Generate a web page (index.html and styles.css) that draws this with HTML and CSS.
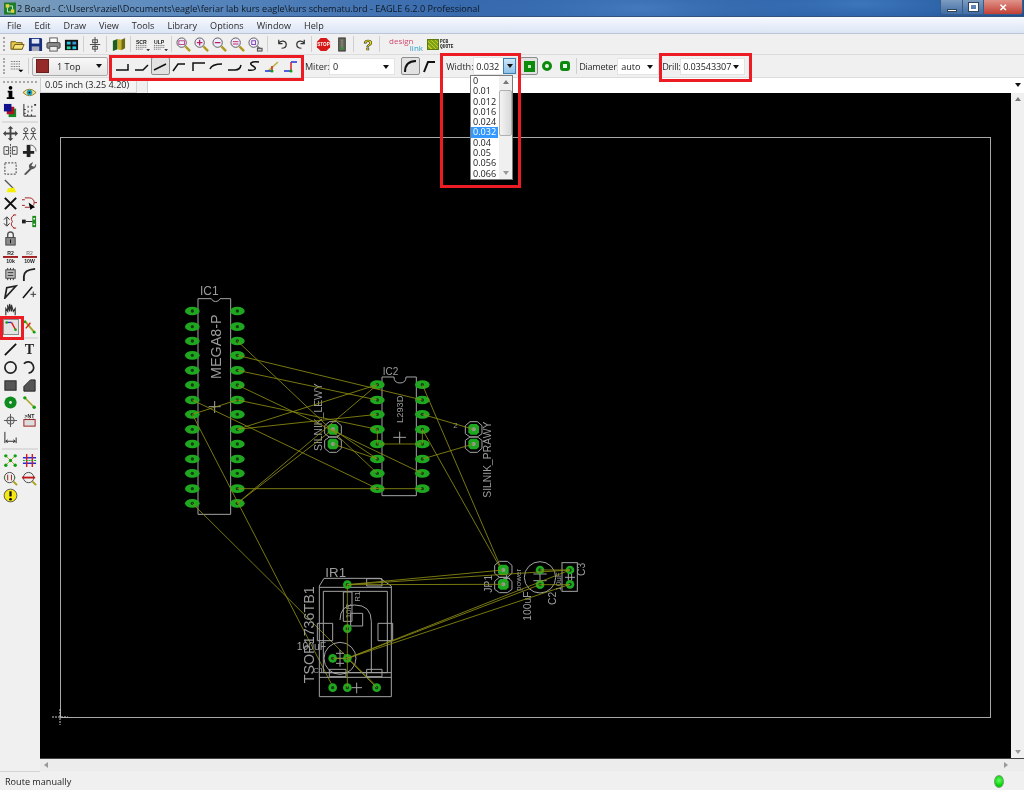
FILE: index.html
```html
<!DOCTYPE html>
<html lang="en">
<head>
<meta charset="utf-8">
<title>2 Board - EAGLE 6.2.0 Professional</title>
<link rel="stylesheet" href="styles.css">
</head>
<body>
<div class="window">
  <header class="titlebar">
    <svg class="app-icon" viewBox="0 0 14 14"><rect width="14" height="14" fill="#1f7a2a"/><rect x="2" y="2" width="4" height="4" fill="#e8d23a"/><rect x="8" y="8" width="4" height="4" fill="#e8d23a"/><path d="M6 4H10V8M4 6V11H8" stroke="#cfe" fill="none"/></svg>
    <span class="title-text">2 Board - C:\Users\raziel\Documents\eagle\feriar lab kurs eagle\kurs schematu.brd - EAGLE 6.2.0 Professional</span>
    <div class="win-controls">
      <span class="win-btn win-min"><i class="glyph-min"></i></span>
      <span class="win-btn win-max"><i class="glyph-max"></i></span>
      <span class="win-btn win-close">✕</span>
    </div>
  </header>

  <nav class="menubar">
    <span>File</span><span>Edit</span><span>Draw</span><span>View</span><span>Tools</span><span>Library</span><span>Options</span><span>Window</span><span>Help</span>
  </nav>

  <div class="toolbar tb-main">
    <i class="grip"></i>
    <span class="btn"><svg viewBox="0 0 16 16"><path d="M1 5H6L7 6H13V13H1Z" fill="#e8c64a" stroke="#6b5a12"/><path d="M3 13L5 8H15L13 13Z" fill="#f6e27d" stroke="#6b5a12"/></svg></span>
    <span class="btn"><svg viewBox="0 0 16 16"><path d="M1 1H14L15 2V15H1Z" fill="#17307e"/><rect x="4" y="2" width="8" height="5" fill="#e4e8f4"/><rect x="4" y="10" width="8" height="5" fill="#aab"/></svg></span>
    <span class="btn"><svg viewBox="0 0 16 16"><rect x="4" y="1" width="8" height="5" fill="#fff" stroke="#555"/><rect x="1" y="6" width="14" height="6" rx="1" fill="#8a8a8a" stroke="#444"/><rect x="4" y="10" width="8" height="5" fill="#eee" stroke="#555"/></svg></span>
    <span class="btn"><svg viewBox="0 0 16 16"><rect x="1" y="3" width="14" height="11" fill="#111"/><rect x="3" y="5" width="4" height="3" fill="#26c6e8"/><rect x="9" y="5" width="4" height="3" fill="#39d"/><rect x="3" y="10" width="4" height="3" fill="#2bd4a0"/><rect x="9" y="10" width="4" height="3" fill="#26c6e8"/></svg></span>
    <i class="sep sep-6"></i>
    <span class="btn"><svg viewBox="0 0 16 16" fill="none" stroke="#444"><rect x="5" y="3" width="5" height="3"/><rect x="5" y="10" width="5" height="3"/><path d="M7.5 0V16M2 8H13"/></svg></span>
    <i class="sep"></i>
    <span class="btn"><svg viewBox="0 0 16 16"><path d="M2 4L7 2V13L2 15Z" fill="#1f5c1f"/><path d="M7 2L11 3V14L7 13Z" fill="#c8b020"/><path d="M11 3L15 1V12L11 14Z" fill="#6d6a10"/></svg></span>
    <i class="sep sep-6"></i>
    <span class="btn"><svg viewBox="0 0 16 16"><text x="1" y="7" class="tiny">SCR</text><path d="M1 9H12M1 11H12M1 13H9" stroke="#555" stroke-dasharray="1 1"/><path d="M12 13H16L14 15Z"/></svg></span>
    <span class="btn"><svg viewBox="0 0 16 16"><text x="1" y="7" class="tiny">ULP</text><path d="M1 9H12M1 11H12M1 13H9" stroke="#555" stroke-dasharray="1 1"/><path d="M12 13H16L14 15Z"/></svg></span>
    <i class="sep"></i>
    <span class="btn"><svg viewBox="0 0 16 16"><circle cx="6" cy="6" r="5" fill="#eef" stroke="#555"/><path d="M10 10L15 15" stroke="#b09a20" stroke-width="2.5"/><rect x="3" y="4" width="6" height="4" fill="none" stroke="#c04080"/></svg></span>
    <span class="btn"><svg viewBox="0 0 16 16"><circle cx="6" cy="6" r="5" fill="#eef" stroke="#555"/><path d="M10 10L15 15" stroke="#b09a20" stroke-width="2.5"/><path d="M3 6H9M6 3V9" stroke="#c02060" stroke-width="1.4"/></svg></span>
    <span class="btn"><svg viewBox="0 0 16 16"><circle cx="6" cy="6" r="5" fill="#eef" stroke="#555"/><path d="M10 10L15 15" stroke="#b09a20" stroke-width="2.5"/><path d="M3 6H9" stroke="#c02060" stroke-width="1.4"/></svg></span>
    <span class="btn"><svg viewBox="0 0 16 16"><circle cx="6" cy="6" r="5" fill="#eef" stroke="#555"/><path d="M10 10L15 15" stroke="#b09a20" stroke-width="2.5"/><path d="M3 5H9M3 7.5H9" stroke="#c02060"/></svg></span>
    <span class="btn"><svg viewBox="0 0 16 16"><circle cx="6" cy="6" r="5" fill="#eef" stroke="#555"/><path d="M10 10L13 13" stroke="#777" stroke-width="2"/><rect x="4" y="4" width="4" height="4" fill="none" stroke="#8040b0"/><rect x="10" y="12" width="5" height="3" fill="#ccc" stroke="#444"/></svg></span>
    <i class="sep sep-9"></i>
    <span class="btn"><svg viewBox="0 0 16 16" fill="none" stroke="#333" stroke-width="1.3"><path d="M4 7C6 3 12 4 12 8S8 12 7 12M4 3V7H8"/></svg></span>
    <span class="btn"><svg viewBox="0 0 16 16" fill="none" stroke="#333" stroke-width="1.3"><path d="M12 7C10 3 4 4 4 8S8 12 9 12M12 3V7H8"/></svg></span>
    <i class="sep"></i>
    <span class="btn"><svg viewBox="0 0 16 16"><path d="M5 1H11L15 5V11L11 15H5L1 11V5Z" fill="#d81818"/><text x="8" y="10" text-anchor="middle" class="stop">STOP</text></svg></span>
    <span class="btn"><svg viewBox="0 0 16 16"><rect x="5" y="1" width="7" height="14" fill="#6a6a5a" stroke="#333"/><path d="M8.5 3V12" stroke="#bbb" stroke-dasharray="1 1"/><path d="M7 11H10V13H7Z" fill="#20a030"/></svg></span>
    <i class="sep sep-9"></i>
    <span class="btn help">?</span>
    <i class="sep"></i>
    <span class="logo-design"><b>design</b><em>link</em></span>
    <span class="logo-pcb"><i></i><span>PCB<br>QUOTE</span></span>
  </div>

  <div class="toolbar tb-opts">
    <i class="grip"></i>
    <span class="btn grid-btn"><svg viewBox="0 0 18 16"><path d="M1 2H12M1 5H12M1 8H12M1 11H12" stroke="#444" stroke-dasharray="1 1"/><path d="M10 12H16L13 15Z"/></svg></span>
    <i class="sep"></i>
    <div class="select layer-select"><i class="swatch"></i><span>1 Top</span><i class="arrow"></i></div>
    <div class="bends">
      <span class="bend"><svg viewBox="0 0 16 16"><path d="M1 12H13V6"/></svg></span>
      <span class="bend"><svg viewBox="0 0 16 16"><path d="M1 12H9L14 7"/></svg></span>
      <span class="bend bend-on"><svg viewBox="0 0 16 16"><path d="M2 12L14 6"/></svg></span>
      <span class="bend"><svg viewBox="0 0 16 16"><path d="M2 13L7 6H14"/></svg></span>
      <span class="bend"><svg viewBox="0 0 16 16"><path d="M3 13V5H15"/></svg></span>
      <span class="bend"><svg viewBox="0 0 16 16"><path d="M2 11Q4 6 14 6"/></svg></span>
      <span class="bend"><svg viewBox="0 0 16 16"><path d="M1 12H8Q13 12 14 7"/></svg></span>
      <span class="bend"><svg viewBox="0 0 16 16"><path d="M14 4C5 3 4 6 8 8S11 13 3 12"/></svg></span>
      <span class="bend bend-color"><svg viewBox="0 0 16 16"><path d="M4 13L14 4" stroke="#b8b040"/><path d="M8 8V13" stroke="#e02020"/><path d="M1 13H8" stroke="#2030e0"/><circle cx="8" cy="13" r="1.5" fill="#10a010" stroke="none"/></svg></span>
      <span class="bend bend-color"><svg viewBox="0 0 16 16"><path d="M8 4V13" stroke="#e02020"/><path d="M1 13H8M8 4H14" stroke="#2030e0"/><circle cx="8" cy="13" r="1.5" fill="#10a010" stroke="none"/></svg></span>
    </div>
    <label class="lbl lbl-miter">Miter:</label>
    <div class="select miter-select"><span>0</span><i class="arrow"></i></div>
    <span class="bend miter-a bend-on"><svg viewBox="0 0 16 16"><path d="M3 14Q3 3 14 3" stroke-width="2"/></svg></span>
    <span class="bend miter-b"><svg viewBox="0 0 16 16"><path d="M3 14L7 4H14" stroke-width="2"/></svg></span>
    <label class="lbl lbl-width">Width:</label>
    <div class="select width-select"><span>0.032</span><i class="arrow-btn"><i class="arrow"></i></i></div>
    <span class="pad-btn pad-on"><i class="pad-sq"></i></span>
    <span class="pad-btn"><i class="pad-round"></i></span>
    <span class="pad-btn"><i class="pad-oct"></i></span>
    <i class="sep"></i>
    <label class="lbl lbl-diam">Diameter:</label>
    <div class="select diam-select"><span>auto</span><i class="arrow"></i></div>
    <label class="lbl lbl-drill">Drill:</label>
    <div class="select drill-select"><span>0.03543307</span><i class="arrow"></i></div>
  </div>

  <div class="workspace">
    <aside class="toolbox">
      <i class="grip-h"></i>
      <span class="tool"><svg viewBox="0 0 16 16"><circle cx="8" cy="3" r="2"/><path d="M5 6H10V13H12V15H4V13H6V8H5Z"/></svg></span>
      <span class="tool"><svg viewBox="0 0 16 16"><path d="M1 8Q8 1 15 8Q8 15 1 8Z" fill="#f4e48a" stroke="#8a7a20"/><circle cx="8" cy="8" r="3" fill="#18a0c8"/><circle cx="8" cy="8" r="1"/></svg></span>
      <span class="tool"><svg viewBox="0 0 16 16"><rect x="6" y="6" width="8" height="9" fill="#118c24"/><rect x="4" y="4" width="8" height="8" fill="#b01020"/><rect x="1" y="1" width="8" height="8" fill="#10108c"/></svg></span>
      <span class="tool"><svg viewBox="0 0 16 16"><path d="M2 1V14H15" fill="none" stroke="#222"/><path d="M2 11H4M2 7H4M6 14V12M10 14V12" stroke="#222"/><path d="M6 4H7M10 4H11M13 2H15M6 9H7M10 8H11" stroke="#333" stroke-width="2"/></svg></span>
      <i class="tool-sep"></i>
      <span class="tool"><svg viewBox="0 0 16 16"><path d="M8 0L11 3H9V7H13V5L16 8L13 11V9H9V13H11L8 16L5 13H7V9H3V11L0 8L3 5V7H7V3H5Z" fill="#444"/></svg></span>
      <span class="tool"><svg viewBox="0 0 16 16" fill="none" stroke="#444"><circle cx="4" cy="4" r="2"/><circle cx="12" cy="4" r="2"/><path d="M4 6V10M1 15L4 10L7 15M1 8H7M12 6V10M9 15L12 10L15 15M9 8H15"/></svg></span>
      <span class="tool"><svg viewBox="0 0 16 16"><path d="M1 4H6V12H1ZM10 4H15V12H10Z" fill="#eee" stroke="#444"/><path d="M8 1V15" stroke="#444" stroke-dasharray="2 1"/><path d="M3 8H5M11 8H13" stroke="#333"/></svg></span>
      <span class="tool"><svg viewBox="0 0 16 16"><path d="M7 2V15" stroke="#222" stroke-width="4"/><path d="M1 10H13" stroke="#222" stroke-width="3"/><path d="M9 2Q15 3 15 9" fill="none" stroke="#666"/></svg></span>
      <span class="tool"><svg viewBox="0 0 16 16"><rect x="2" y="2" width="12" height="12" fill="none" stroke="#333" stroke-dasharray="2 1.5"/></svg></span>
      <span class="tool"><svg viewBox="0 0 16 16"><path d="M2 14L8 8Q6 4 10 2L12 1L10 5L13 6L15 3Q16 8 10 9L4 15Z" fill="#555"/></svg></span>
      <span class="tool"><svg viewBox="0 0 16 16"><path d="M2 1L11 10" stroke="#555" stroke-width="1.5"/><path d="M5 10L12 9L14 14H4Z" fill="#f4f000"/></svg></span>
      <span class="tool-gap"></span>
      <span class="tool"><svg viewBox="0 0 16 16"><path d="M2 2L14 14M14 2L2 14" stroke="#111" stroke-width="2.2"/></svg></span>
      <span class="tool"><svg viewBox="0 0 16 16"><path d="M3 2H8A5 5 0 0 1 8 12H3M0 4H3M0 10H3M13 7H16" fill="none" stroke="#a01818"/><path d="M7 7L14 12L11 13L9 15Z"/></svg></span>
      <span class="tool"><svg viewBox="0 0 16 16"><path d="M11 1H14M11 15H14M12 1Q7 4 10 8Q7 12 12 15" fill="none" stroke="#a01818"/><path d="M4 4V12M1 6L4 3L7 6M1 10L4 13L7 10" fill="none" stroke="#222"/></svg></span>
      <span class="tool"><svg viewBox="0 0 16 16"><rect x="11" y="2" width="4" height="12" fill="#1a8a1a"/><rect x="0" y="6" width="4" height="4" fill="#222"/><path d="M4 8H11" stroke="#222"/><circle cx="13" cy="5" r="1" fill="#fff"/><circle cx="13" cy="11" r="1" fill="#fff"/></svg></span>
      <span class="tool"><svg viewBox="0 0 16 16"><path d="M5 7V4A3 3 0 0 1 11 4V7" fill="none" stroke="#555" stroke-width="1.5"/><rect x="3" y="7" width="10" height="8" fill="#8a8a8a" stroke="#444"/><path d="M8 9V13" stroke="#111"/></svg></span>
      <span class="tool-gap"></span>
      <span class="tool"><svg viewBox="0 0 16 16"><text x="8" y="6" text-anchor="middle" class="tiny">R2</text><path d="M0 8.5H16" stroke="#a01818" stroke-width="2"/><text x="8" y="15" text-anchor="middle" class="tiny">10k</text></svg></span>
      <span class="tool"><svg viewBox="0 0 16 16"><text x="8" y="6" text-anchor="middle" class="tiny tiny-grey">R2</text><path d="M0 8.5H16" stroke="#a01818" stroke-width="2"/><text x="8" y="15" text-anchor="middle" class="tiny">10W</text></svg></span>
      <span class="tool"><svg viewBox="0 0 16 16"><rect x="3" y="3" width="10" height="9" fill="#bbb" stroke="#444"/><path d="M5 1V3M8 1V3M11 1V3M5 12V14M8 12V14M11 12V14" stroke="#333"/><path d="M5 6H11M5 9H11" stroke="#333"/></svg></span>
      <span class="tool"><svg viewBox="0 0 16 16"><path d="M2 15V10Q2 3 14 2" fill="none" stroke="#222" stroke-width="2"/></svg></span>
      <span class="tool"><svg viewBox="0 0 16 16"><path d="M2 15L4 4L14 2L2 15Z" fill="none" stroke="#222" stroke-width="1.8"/></svg></span>
      <span class="tool"><svg viewBox="0 0 16 16"><path d="M1 15L11 3" stroke="#111" stroke-width="1.6"/><path d="M9 11H15M12 8V14" stroke="#333"/></svg></span>
      <span class="tool"><svg viewBox="0 0 16 16"><path d="M3 14V7L5 10V3L7 10V2L9 10V3L11 10L13 7V14" fill="none" stroke="#333" stroke-width="1.2"/></svg></span>
      <span class="tool-gap"></span>
      <span class="tool tool-on"><svg viewBox="0 0 16 16"><path d="M2 3H8" stroke="#2030d0" stroke-width="1.6"/><path d="M8 3L13 12" stroke="#e01818" stroke-width="1.8"/><circle cx="2" cy="3" r="1.6" fill="#10a010"/><circle cx="13" cy="12" r="1.6" fill="#10a010"/></svg></span>
      <span class="tool"><svg viewBox="0 0 16 16"><path d="M3 2L13 14" stroke="#a8a020" stroke-width="2"/><path d="M9 4L4 10" stroke="#e01818" stroke-width="1.4"/><circle cx="3" cy="3" r="1.5" fill="#10a010"/><circle cx="13" cy="14" r="1.5" fill="#10a010"/></svg></span>
      <i class="tool-sep"></i>
      <span class="tool"><svg viewBox="0 0 16 16"><path d="M2 14L14 2" stroke="#111" stroke-width="1.8"/></svg></span>
      <span class="tool tool-t">T</span>
      <span class="tool"><svg viewBox="0 0 16 16"><circle cx="8" cy="8" r="6" fill="none" stroke="#222" stroke-width="1.8"/></svg></span>
      <span class="tool"><svg viewBox="0 0 16 16"><path d="M2 4A6 6 0 1 1 7 14" fill="none" stroke="#222" stroke-width="1.8"/></svg></span>
      <span class="tool"><svg viewBox="0 0 16 16"><rect x="2" y="3" width="12" height="10" fill="#555" stroke="#222"/></svg></span>
      <span class="tool"><svg viewBox="0 0 16 16"><path d="M2 9L9 2H14V14H2Z" fill="#555" stroke="#222"/></svg></span>
      <span class="tool"><svg viewBox="0 0 16 16"><circle cx="8" cy="8" r="6.5" fill="#0e8c1e"/><circle cx="8" cy="8" r="1.5" fill="#e8e8e8"/></svg></span>
      <span class="tool"><svg viewBox="0 0 16 16"><path d="M3 3L13 13" stroke="#a8a020" stroke-width="1.6"/><circle cx="3" cy="3" r="1.8" fill="#10a010"/><circle cx="13" cy="13" r="1.8" fill="#10a010"/></svg></span>
      <span class="tool"><svg viewBox="0 0 16 16"><circle cx="8" cy="8" r="4" fill="#ddd" stroke="#555"/><path d="M1 8H15M8 1V15" stroke="#555"/></svg></span>
      <span class="tool"><svg viewBox="0 0 16 16"><text x="8" y="5" text-anchor="middle" class="tiny">&gt;NT</text><rect x="2" y="7" width="12" height="7" fill="#ddd" stroke="#a01818"/><path d="M4 6V7M8 6V7M12 6V7" stroke="#333"/></svg></span>
      <span class="tool"><svg viewBox="0 0 16 16"><path d="M2 2V14M14 8V14M3 12H13M3 12L5 10.5M3 12L5 13.5M13 12L11 10.5M13 12L11 13.5" fill="none" stroke="#222"/></svg></span>
      <span class="tool-gap"></span>
      <i class="tool-sep"></i>
      <span class="tool"><svg viewBox="0 0 16 16"><path d="M3 3L13 13M13 3L3 13" stroke="#b0a830"/><circle cx="3" cy="3" r="1.8" fill="#10a010"/><circle cx="13" cy="3" r="1.8" fill="#10a010"/><circle cx="3" cy="13" r="1.8" fill="#10a010"/><circle cx="13" cy="13" r="1.8" fill="#10a010"/><circle cx="8" cy="8" r="1.8" fill="#10a010"/></svg></span>
      <span class="tool"><svg viewBox="0 0 16 16"><path d="M1 5H15M1 11H15" stroke="#2030e0" stroke-width="1.5"/><path d="M5 1V15M11 1V15" stroke="#e01818" stroke-width="1.5"/><path d="M1 8H15" stroke="#10a010" stroke-dasharray="2 1"/></svg></span>
      <span class="tool"><svg viewBox="0 0 16 16"><circle cx="7" cy="7" r="5.5" fill="#eee" stroke="#444"/><path d="M5 4V10M9 4V10" stroke="#a01818"/><path d="M2 7H1M12 7H13" stroke="#10a010" stroke-width="2"/><path d="M11 11L15 15" stroke="#a8a020" stroke-width="2"/></svg></span>
      <span class="tool"><svg viewBox="0 0 16 16"><circle cx="7" cy="7" r="5.5" fill="#eee" stroke="#444"/><path d="M0 7H14" stroke="#c01818" stroke-width="2"/><path d="M11 11L15 15" stroke="#a8a020" stroke-width="2"/></svg></span>
      <span class="tool"><svg viewBox="0 0 16 16"><circle cx="8" cy="8" r="6.8" fill="#f5e810" stroke="#555"/><path d="M8 3.5V9" stroke="#111" stroke-width="2.4"/><circle cx="8" cy="12" r="1.4"/></svg></span>
    </aside>

    <div class="editor">
      <div class="coordbar">
        <span class="coord-field">0.05 inch (3.25 4.20)</span>
        <span class="coord-gap"></span>
        <span class="cmd-input"><i class="arrow"></i></span>
      </div>
      <div class="canvas-row">
        <svg class="board" viewBox="40 93 971 665" preserveAspectRatio="none">
          <defs>
            <g id="pad"><ellipse rx="22" ry="13" fill="#1fa81f"/><circle r="5" fill="#123c12"/></g>
            <g id="rpad"><circle r="13" fill="#1fa81f"/><circle r="5" fill="#123c12"/></g>
            <g id="opad"><path d="M-16 -9L-9 -16H9L16 -9V9L9 16H-9L-16 9Z" fill="#1fa81f"/><circle r="6" fill="#9a9a9a"/></g>
          </defs>
          <rect x="40" y="93" width="971" height="665" fill="#000"/>
          <rect class="outline" x="60" y="137" width="930" height="580"/>
          <path class="cross" d="M52 717H68M60 709V725"/>

          <g transform="translate(170 275) scale(.33333)">
            <g class="silk">
              <path d="M84 71H124A14 14 0 0 0 150 71H182V718H84Z"/>
              <path d="M636 306H672Q672 324 690 324T708 306H739V662H636Z"/>
              <path d="M116 395H152M134 378V414M670 487H708M689 470V506"/>
              <path d="M478 440H500L514 452V476L500 486H478L464 476V452ZM478 486H500L514 496V520L500 532H478L464 520V496Z"/>
              <path d="M900 440H922L936 452V476L922 486H900L886 476V452ZM900 486H922L936 496V520L922 532H900L886 520V496Z"/>
            </g>
            <text class="t36" x="90" y="60">IC1</text>
            <text class="t43" transform="translate(152 312) rotate(-90)">MEGA8-P</text>
            <text class="t30" x="638" y="299">IC2</text>
            <text class="t28" transform="translate(698 444) rotate(-90)">L293D</text>
            <text class="t31" transform="translate(456 528) rotate(-90)">SILNIK_LEWY</text>
            <text class="t31" transform="translate(964 668) rotate(-90)">SILNIK_PRAWY</text>
            <text class="t24" x="850" y="458">2</text>

            <use href="#pad" x="67" y="108"/><use href="#pad" x="67" y="155"/><use href="#pad" x="67" y="198"/><use href="#pad" x="67" y="241"/><use href="#pad" x="67" y="286"/><use href="#pad" x="67" y="330"/><use href="#pad" x="67" y="375"/><use href="#pad" x="67" y="418"/><use href="#pad" x="67" y="463"/><use href="#pad" x="67" y="507"/><use href="#pad" x="67" y="552"/><use href="#pad" x="67" y="595"/><use href="#pad" x="67" y="641"/><use href="#pad" x="67" y="685"/>
            <use href="#pad" x="202" y="108"/><use href="#pad" x="202" y="155"/><use href="#pad" x="202" y="198"/><use href="#pad" x="202" y="241"/><use href="#pad" x="202" y="286"/><use href="#pad" x="202" y="330"/><use href="#pad" x="202" y="375"/><use href="#pad" x="202" y="418"/><use href="#pad" x="202" y="463"/><use href="#pad" x="202" y="507"/><use href="#pad" x="202" y="552"/><use href="#pad" x="202" y="595"/><use href="#pad" x="202" y="641"/><use href="#pad" x="202" y="685"/>
            <use href="#pad" x="622" y="329"/><use href="#pad" x="622" y="375"/><use href="#pad" x="622" y="418"/><use href="#pad" x="622" y="463"/><use href="#pad" x="622" y="507"/><use href="#pad" x="622" y="552"/><use href="#pad" x="622" y="595"/><use href="#pad" x="622" y="641"/>
            <use href="#pad" x="757" y="329"/><use href="#pad" x="757" y="375"/><use href="#pad" x="757" y="418"/><use href="#pad" x="757" y="463"/><use href="#pad" x="757" y="507"/><use href="#pad" x="757" y="552"/><use href="#pad" x="757" y="595"/><use href="#pad" x="757" y="641"/>
            <use href="#opad" x="489" y="463"/><use href="#opad" x="489" y="507"/><use href="#opad" x="911" y="463"/><use href="#opad" x="911" y="507"/>

            <path class="air" d="M202 198L622 595M202 241L757 375M202 286L622 375M202 330L757 595M202 375L622 463M67 375L622 641M67 418L202 375M67 418L489 1236M202 463L622 418M202 463L622 329M202 641H757M202 685L622 329M202 685L489 463M489 463L622 552M489 507L622 552M622 463V507H757V463M757 418L911 463M757 552L911 507M757 329L1000 895M757 463L1000 895M67 685L622 1236"/>
          </g>

          <g transform="translate(290 550) scale(.33333)">
            <g class="silk">
              <path d="M102 85H270L304 108V440H88V108ZM88 112H304M100 124H292V368H100ZM88 368H304M88 382H304"/>
              <path d="M230 86H276V108H230ZM82 220H128V272H82ZM264 220H308V272H264ZM118 358H168V380H118ZM230 358H276V380H230Z"/>
              <path d="M160 126H186V214H160ZM150 210Q150 165 194 165Q244 165 244 215V368M182 190H218V228H182Z"/>
              <circle cx="150" cy="325" r="48"/>
              <path d="M138 310H162M138 340H162M150 300V350M128 325H172M184 413H216M200 398V430"/>
              <path d="M628 34H652L666 46V70L652 82H628L614 70V46ZM628 82H652L666 94V118L652 128H628L614 118V94Z"/>
              <path d="M640 85H660M650 75V95"/>
              <circle cx="750" cy="82" r="47"/>
              <path d="M730 72H770M730 92H770M750 60V104"/>
              <rect x="816" y="38" width="46" height="86"/>
              <path d="M825 82H855M835 72V92M845 72V92"/>
            </g>
            <text class="t40" x="106" y="81">IR1</text>
            <text class="t43" transform="translate(72 400) rotate(-90)">TSOP1736TB1</text>
            <text class="t24" transform="translate(210 155) rotate(-90)">R1</text>
            <text class="t24" transform="translate(182 205) rotate(-90)">10R</text>
            <text class="t31" x="20" y="300">100uF</text>
            <text class="t24" x="70" y="368">C1</text>
            <text class="t31" transform="translate(606 128) rotate(-90)">JP1</text>
            <text class="t24" transform="translate(694 122) rotate(-90)">power</text>
            <text class="t31" transform="translate(722 212) rotate(-90)">100uF</text>
            <text class="t31" transform="translate(798 165) rotate(-90)">C2</text>
            <text class="t24" transform="translate(812 122) rotate(-90)">10uF</text>
            <text class="t31" transform="translate(884 78) rotate(-90)">C3</text>

            <use href="#rpad" x="172" y="104"/><use href="#rpad" x="172" y="236"/><use href="#rpad" x="128" y="325"/><use href="#rpad" x="172" y="325"/><use href="#rpad" x="128" y="413"/><use href="#rpad" x="172" y="413"/><use href="#rpad" x="260" y="413"/>
            <use href="#opad" x="640" y="60"/><use href="#opad" x="640" y="103"/>
            <use href="#rpad" x="750" y="60"/><use href="#rpad" x="750" y="104"/><use href="#rpad" x="840" y="60"/><use href="#rpad" x="840" y="103"/>

            <path class="air" d="M172 104L840 60M172 104L640 60M172 104L640 103M172 104V413M172 325L750 104M172 325L840 103M172 325L840 60M128 325H172M172 325L260 413M750 60H840M750 104H840"/>
          </g>
        </svg>
        <div class="vscroll"><i class="arr-up"></i><i class="arr-down"></i></div>
      </div>
      <div class="hscroll"><i class="arr-left"></i><i class="arr-right"></i></div>
    </div>
  </div>

  <footer class="statusbar"><span>Route manually</span><i class="led"></i></footer>

  <ul class="dropdown">
    <li>0</li><li>0.01</li><li>0.012</li><li>0.016</li><li>0.024</li><li class="sel">0.032</li><li>0.04</li><li>0.05</li><li>0.056</li><li>0.066</li>
    <li class="dd-scroll"><i class="arr-up"></i><i class="thumb"></i><i class="arr-down"></i></li>
  </ul>

  <i class="mark mark-bends"></i>
  <i class="mark mark-width"></i>
  <i class="mark mark-drill"></i>
  <i class="mark mark-route"></i>
</div>
</body>
</html>
```

FILE: styles.css
```css
* { box-sizing: border-box; }
html, body { margin: 0; padding: 0; background: #f0f0f0; }
body { width: 1024px; height: 790px; overflow: hidden; }
i, em { font-style: normal; display: block; }

.window {
  position: relative;
  display: flex;
  flex-direction: column;
  width: 1024px;
  height: 790px;
  overflow: hidden;
  background: #f0f0f0;
  font: 9.1px "Open Sans", "Liberation Sans", sans-serif;
  color: #222;
  filter: blur(.35px);
}

/* title bar */
.titlebar {
  display: flex;
  align-items: center;
  height: 17px;
  flex: none;
  padding-left: 4px;
  background:
    radial-gradient(ellipse 180px 30px at 640px 8px, #4479bd 0, rgba(68,121,189,0) 100%),
    radial-gradient(ellipse 170px 26px at 860px 4px, #3d76bb 0, rgba(61,118,187,0) 100%),
    linear-gradient(90deg, #7fa0bb 0, #5e8cc0 15%, #3769ad 45%, #255a9f 65%, #1d4f93 100%);
  border-bottom: 1px solid #34507c;
}
.app-icon { width: 12px; height: 13px; flex: none; }
.title-text { margin-left: 1px; font-size: 9.1px; color: #101820; white-space: nowrap; }
.win-controls { display: flex; height: 15px; margin-left: auto; margin-right: 1px; align-self: flex-start; }
.win-btn {
  display: flex; align-items: center; justify-content: center;
  height: 15px;
  border: 1px solid #3a5c88;
  border-top: 0;
  color: #fff;
}
.win-min { width: 23px; border-radius: 0 0 0 3px; background: linear-gradient(#7d9cc0, #3f6da6); }
.win-max { width: 21px; border-left: 0; background: linear-gradient(#7d9cc0, #3f6da6); }
.win-close { width: 39px; border-left: 0; border-radius: 0 0 3px 0; background: linear-gradient(#e0948a, #c24036); font-size: 10px; font-weight: 700; }
.glyph-min { width: 10px; height: 3px; margin-top: 6px; background: #fff; border: 1px solid #345; }
.glyph-max { width: 9px; height: 8px; border: 2px solid #fff; outline: 1px solid #345; }

/* menu */
.menubar {
  display: flex;
  align-items: center;
  gap: 13px;
  height: 17px;
  flex: none;
  padding-left: 7px;
  background: linear-gradient(#f6f9fe, #dbe5f5);
  border-bottom: 1px solid #bcc6d6;
  color: #2a2a2a;
}

/* tool bars */
.toolbar { display: flex; align-items: center; flex: none; position: relative; background: #f0f0f0; }
.tb-main { height: 21px; padding-left: 8px; border-bottom: 1px solid #dcdcdc; }
.tb-opts { height: 23px; padding-left: 8px; border-bottom: 1px solid #dcdcdc; }
.grip { position: absolute; left: 3px; top: 3px; bottom: 3px; width: 2px; border-left: 2px dotted #a8a8a8; }
.btn { display: flex; align-items: center; justify-content: center; width: 18px; height: 18px; flex: none; }
.btn svg { width: 15px; height: 15px; }
.sep { width: 1px; height: 16px; flex: none; margin: 0 2px; background: #cfcfcf; }
.sep-6 { margin: 0 2px 0 3px; }
.sep-9 { margin: 0 5px 0 3px; }
.tiny { font: 700 5.5px "Liberation Sans", sans-serif; fill: #222; }
.tiny-grey { fill: #888; }
.stop { font: 700 5px "Liberation Sans", sans-serif; fill: #fff; }
.help { font: 700 15px "Liberation Sans", sans-serif; color: #efe000; -webkit-text-stroke: .6px #333; }
.logo-design { display: flex; flex-direction: column; width: 34px; margin-left: 7px; line-height: 7px; font-size: 8px; }
.logo-design b { color: #cf4a70; font-weight: 400; }
.logo-design em { align-self: flex-end; color: #2f9cc8; }
.logo-pcb { display: flex; align-items: center; gap: 1px; margin-left: 4px; font: 700 4.5px/5px "Liberation Mono", monospace; }
.logo-pcb i { width: 12px; height: 11px; background: repeating-linear-gradient(45deg, #7da31a 0 2px, #c9c820 2px 3px); border: 1px solid #5d7a12; }

.select {
  display: flex; align-items: center; height: 17px; flex: none;
  padding-left: 3px;
  background: #fff;
  border: 1px solid #e4e4e4;
  position: relative;
}
.arrow { position: absolute; right: 5px; top: 6px; width: 0; height: 0; border: 3.5px solid transparent; border-top: 4px solid #111; border-bottom: 0; }
.layer-select { width: 76px; background: linear-gradient(#f8f8f8, #e6e6e6); border-color: #aaa; border-radius: 2px; margin-left: 1px; gap: 8px; height: 19px; }
.swatch { width: 13px; height: 14px; background: #942a2a; border: 1px solid #6b2020; }
.bends { display: flex; margin-left: 6px; }
.bend { display: flex; align-items: center; justify-content: center; width: 18.6px; height: 18px; flex: none; }
.bend svg { width: 16px; height: 16px; fill: none; stroke: #111; stroke-width: 1.5; }
.bend-on { background: #e2e2e2; border: 1px solid #8c8c8c; border-radius: 2px; }
.lbl { flex: none; white-space: nowrap; color: #2a2a2a; }
.lbl-miter { width: 24px; margin-left: 5px; }
.miter-select { width: 66px; }
.miter-a { margin-left: 6px; }
.lbl-width { width: 27px; margin-left: 8px; }
.width-select { width: 44px; height: 18px; padding-left: 2px; }
.width-select .arrow-btn { position: absolute; right: 0; top: 0; width: 13px; height: 16px; background: linear-gradient(#cfe6f8, #8fc0e6); border: 1px solid #3c7fb1; }
.width-select .arrow { right: 2px; top: 5px; }
.pad-btn { display: flex; align-items: center; justify-content: center; width: 18px; height: 18px; flex: none; }
.pad-on { margin-left: 3px; background: #e2e2e2; border: 1px solid #8c8c8c; border-radius: 2px; }
.pad-sq { width: 11px; height: 11px; background: #0c8a0c; border: 4px solid #0c8a0c; box-shadow: inset 0 0 0 2px #bfe8bf; }
.pad-round { width: 10px; height: 10px; border-radius: 50%; background: #e8f4e8; border: 3.5px solid #0c8a0c; }
.pad-oct { width: 10px; height: 10px; border-radius: 3px; background: #e8f4e8; border: 3.5px solid #0c8a0c; }
.lbl-diam { width: 38px; margin-left: 0; letter-spacing: -.25px; }
.diam-select { width: 42px; }
.lbl-drill { width: 18px; margin-left: 3px; letter-spacing: -.2px; }
.drill-select { width: 65px; padding-left: 2px; letter-spacing: -.1px; }

/* workspace */
.workspace { display: flex; flex: 1; min-height: 0; }
.toolbox {
  display: grid;
  grid-template-columns: 19px 19px;
  align-content: start;
  justify-content: center;
  width: 40px;
  flex: none;
  padding: 6px 0 0;
  border-bottom: 1px solid #d4d4d4;
  position: relative;
}
.grip-h { position: absolute; left: 3px; right: 3px; top: 3px; height: 2px; border-top: 2px dotted #a8a8a8; }
.tool { display: flex; align-items: center; justify-content: center; height: 17.6px; }
.tool svg { width: 15px; height: 15px; }
.tool-gap { display: block; height: 17.6px; }
.tool-sep { grid-column: 1 / span 2; height: 2px; background: #dcdcdc; margin: 1.7px 1px; }
.tool-t { font: 700 14px "Liberation Serif", serif; color: #222; }
.tool-on { height: 15.6px; margin: 1px 1px 1px 2px; background: #e2e2e2; border: 1px solid #8c8c8c; }
.tool-on svg { width: 13px; height: 13px; }

.editor { display: flex; flex-direction: column; flex: 1; min-width: 0; }
.coordbar { display: flex; height: 15px; flex: none; }
.coord-field { width: 97px; padding-left: 4px; line-height: 14px; background: #f4f4f4; border: 1px solid #d0d0d0; border-top: 0; white-space: nowrap; }
.coord-gap { width: 11px; background: #f0f0f0; border-right: 1px solid #ccc; }
.cmd-input { flex: 1; position: relative; background: #fff; }
.cmd-input .arrow { right: 3px; top: 5px; }
.canvas-row { display: flex; height: 665px; flex: none; }
.board { width: 971px; height: 665px; display: block; flex: none; }
.vscroll { flex: 1; display: flex; flex-direction: column; align-items: center; justify-content: space-between; padding: 4px 0; background: #f0f0f0; }
.hscroll { height: 13px; flex: none; display: flex; align-items: center; justify-content: space-between; padding: 0 16px 0 4px; background: #ececec; border-top: 1px solid #444; }
.arr-up { width: 0; height: 0; border: 3px solid transparent; border-top: 0; border-bottom: 4px solid #777; }
.arr-down { width: 0; height: 0; border: 3px solid transparent; border-bottom: 0; border-top: 4px solid #999; }
.arr-left { width: 0; height: 0; border: 3px solid transparent; border-left: 0; border-right: 4px solid #999; }
.arr-right { width: 0; height: 0; border: 3px solid transparent; border-right: 0; border-left: 4px solid #999; }

.statusbar { display: flex; align-items: center; justify-content: space-between; height: 18px; flex: none; padding: 0 20px 0 5px; background: #f0f0f0; color: #222; }
.led { width: 10px; height: 13px; border-radius: 50%; background: radial-gradient(circle at 50% 40%, #60ff60, #00d000 70%); border: 1px solid #70a070; }

/* board drawing */
.outline { fill: none; stroke: #a8a8a8; stroke-width: 1; shape-rendering: crispEdges; }
.cross { fill: none; stroke: #c8c8c8; stroke-dasharray: 2 1; }
.silk { fill: none; stroke: #a4a4a4; stroke-width: 3; }
.air { fill: none; stroke: #8a8a12; stroke-width: 2.6; }
.board text { fill: #9c9c9c; font-family: "Liberation Sans", sans-serif; }
.t24 { font-size: 24px; }
.t28 { font-size: 28px; }
.t30 { font-size: 30px; }
.t31 { font-size: 31px; }
.t36 { font-size: 36px; }
.t40 { font-size: 40px; }
.t43 { font-size: 43px; }

/* width dropdown */
.dropdown {
  position: absolute;
  left: 470px; top: 75px;
  width: 43px; height: 105px;
  margin: 0; padding: 0 14px 0 0;
  list-style: none;
  background: #fff;
  border: 1px solid #7a7a7a;
  color: #222;
}
.dropdown li { height: 10.3px; line-height: 10.3px; padding-left: 2px; }
.dropdown li.sel { background: #3399ff; color: #fff; }
.dropdown li.dd-scroll {
  position: absolute; right: 0; top: 0; bottom: 0; width: 13px; height: auto;
  padding: 4px 0; display: flex; flex-direction: column; align-items: center; justify-content: space-between;
  background: #f0f0f0;
}
.thumb { position: absolute; left: 0; top: 14px; width: 13px; height: 46px; background: linear-gradient(90deg, #f4f4f4, #d8d8d8); border: 1px solid #b0b0b0; border-radius: 2px; }

/* red annotation frames */
.mark { position: absolute; border: 3px solid #ed1c24; pointer-events: none; }
.mark-bends { left: 109px; top: 55px; width: 195px; height: 26px; }
.mark-width { left: 440px; top: 53px; width: 81px; height: 135px; }
.mark-drill { left: 659px; top: 53px; width: 93px; height: 29px; }
.mark-route { left: 0; top: 316px; width: 24px; height: 24px; }
```
